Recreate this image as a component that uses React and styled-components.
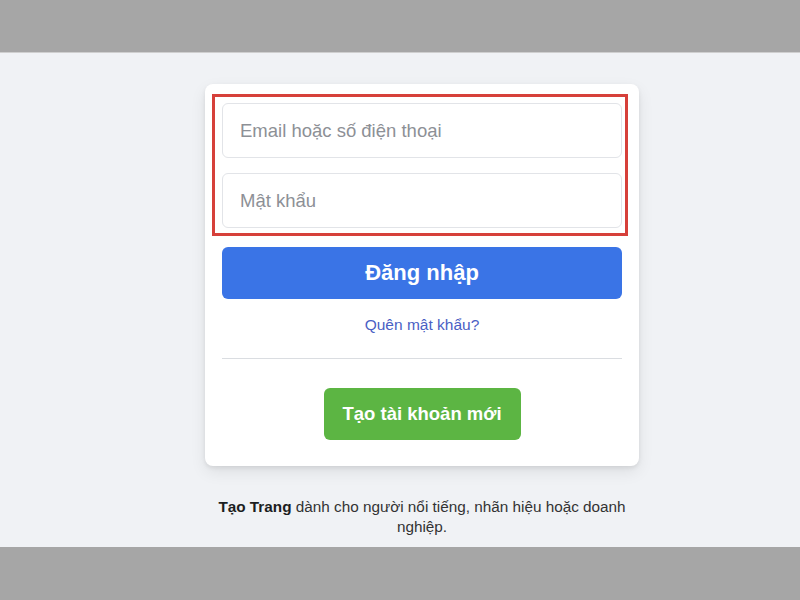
import React from 'react';
import styled, { createGlobalStyle } from 'styled-components';

const Global = createGlobalStyle`
  html, body { margin: 0; padding: 0; }
  body {
    width: 800px;
    height: 600px;
    overflow: hidden;
    font-family: "Liberation Sans", Arial, sans-serif;
    background: #f0f2f5;
  }
`;

const Page = styled.div`
  width: 800px;
  height: 600px;
  display: flex;
  flex-direction: column;
`;

const Band = styled.div`
  height: ${p => p.h}px;
  flex-shrink: 0;
  background: #a6a6a6;
  border-bottom: ${p => (p.top ? '1px solid #cfcfcf' : 'none')};
`;

const Main = styled.main`
  flex: 1;
  display: flex;
  flex-direction: column;
  align-items: center;
  padding: 31px 0 0 44px;
  background: #f0f2f5;
`;

const Card = styled.div`
  width: 434px;
  box-sizing: border-box;
  background: #fff;
  border-radius: 8px;
  box-shadow: 0 2px 4px rgba(0, 0, 0, 0.08), 0 6px 16px rgba(0, 0, 0, 0.08);
  padding: 10px 17px 26px;
  display: flex;
  flex-direction: column;
`;

const Highlight = styled.div`
  margin: 0 -6px 0 -10px;
  padding: 6px 3px 5px 7px;
  border: 3px solid #d6403a;
  display: flex;
  flex-direction: column;
  gap: 15px;
`;

const Input = styled.input`
  height: 55px;
  box-sizing: border-box;
  border: 1px solid #e2e4e8;
  border-radius: 6px;
  padding: 0 17px;
  font-family: inherit;
  font-size: 18.5px;
  color: #1c1e21;
  outline: none;
  &::placeholder { color: #8d9096; }
`;

const Button = styled.button`
  border: none;
  border-radius: 6px;
  height: 52px;
  color: #fff;
  font-family: inherit;
  font-weight: bold;
  font-size: ${p => p.size}px;
  background: ${p => p.bg};
  cursor: pointer;
`;

const LoginButton = styled(Button)`
  margin-top: 11px;
  width: 100%;
`;

const CreateButton = styled(Button)`
  align-self: center;
  width: 197px;
  margin-top: 29px;
`;

const Forgot = styled.a`
  margin-top: 16px;
  align-self: center;
  font-size: 15.5px;
  line-height: 20px;
  color: #4a60c4;
  text-decoration: none;
`;

const Divider = styled.hr`
  margin: 23px 0 0;
  border: none;
  border-top: 1px solid #dadde1;
`;

const Footer = styled.p`
  width: 420px;
  margin: 31px 0 0;
  text-align: center;
  font-size: 15.3px;
  line-height: 20px;
  color: #333;
  b { color: #1c1e21; }
`;

export default function App() {
  return (
    <Page>
      <Global />
      <Band h={52} top />
      <Main>
        <Card>
          <Highlight>
            <Input placeholder="Email hoặc số điện thoại" />
            <Input type="password" placeholder="Mật khẩu" />
          </Highlight>
          <LoginButton bg="#3a74e6" size={22}>Đăng nhập</LoginButton>
          <Forgot href="#">Quên mật khẩu?</Forgot>
          <Divider />
          <CreateButton bg="#5cb543" size={18.5}>Tạo tài khoản mới</CreateButton>
        </Card>
        <Footer>
          <b>Tạo Trang</b> dành cho người nổi tiếng, nhãn hiệu hoặc doanh nghiệp.
        </Footer>
      </Main>
      <Band h={53} />
    </Page>
  );
}
